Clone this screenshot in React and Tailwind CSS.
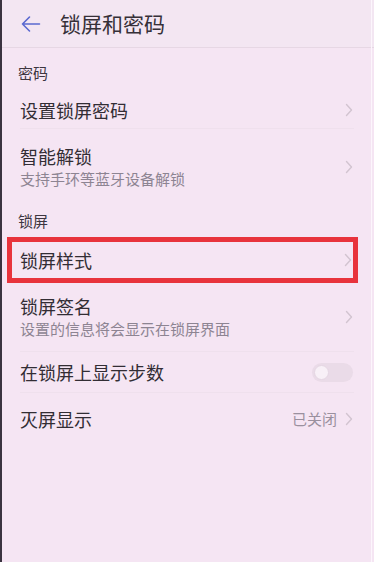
import React from "react";

const font = { fontFamily: '"Noto Sans CJK SC", "Noto Sans", sans-serif' };

function Chevron() {
  return (
    <svg width="8" height="14" viewBox="0 0 8 14" className="shrink-0">
      <path d="M1.5 1.5 L6.5 7 L1.5 12.5" fill="none" stroke="#d2c4d0" strokeWidth="1.4" strokeLinecap="round" strokeLinejoin="round" />
    </svg>
  );
}

function Divider() {
  return <div className="mx-5 h-px bg-[#efe0ed]" />;
}

export default function App() {
  return (
    <div style={font} className="relative w-[374px] h-[562px] overflow-hidden bg-[#f5e5f3] text-[#322d34]">
      <div className="absolute left-0 top-0 h-full w-[2px] bg-[#3a3340]" />
      <div className="absolute right-[2px] top-0 h-full w-px bg-[#fcf6fc]" />
      {/* header */}
      <div className="h-[48px] flex items-center border-b border-[#e6d7e4] bg-[#f3e6f2]">
        <div className="w-[60px] shrink-0 flex items-center pl-[20px]">
          <svg width="21" height="18" viewBox="0 0 21 18" className="shrink-0">
            <path d="M19.5 9 H2.5 M9.5 2 L2.5 9 L9.5 16" fill="none" stroke="#5b69d0" strokeWidth="1.6" strokeLinecap="round" strokeLinejoin="round" />
          </svg>
        </div>
        <span className="text-[21px] leading-none text-[#363038]">锁屏和密码</span>
      </div>
      {/* section 密码 */}
      <div className="h-[44px] flex items-center pl-[18px] pt-[6px] text-[15px] text-[#3d3640]">密码</div>
      <div className="h-[36px] flex items-center justify-between pl-5 pr-[21px]">
        <span className="text-[18px]">设置锁屏密码</span>
        <Chevron />
      </div>
      <Divider />
      <div className="h-[76px] flex items-center justify-between pl-5 pr-[21px]">
        <div className="flex flex-col">
          <span className="text-[18px] leading-[24px]">智能解锁</span>
          <span className="text-[15px] leading-[22px] text-[#8d8492]">支持手环等蓝牙设备解锁</span>
        </div>
        <Chevron />
      </div>
      {/* section 锁屏 */}
      <div className="h-[32px] flex items-center pl-[18px] text-[15px] text-[#3d3640]">锁屏</div>
      <div className="ml-[7px] mr-[16px] h-[46px] flex items-center justify-between border-[5px] border-[#e8333c] pl-[8px] pr-[1px]">
        <span className="text-[18px]">锁屏样式</span>
        <Chevron />
      </div>
      <div className="h-[68px] flex items-center justify-between pl-5 pr-[21px]">
        <div className="flex flex-col">
          <span className="text-[18px] leading-[24px]">锁屏签名</span>
          <span className="text-[15px] leading-[22px] text-[#8d8492]">设置的信息将会显示在锁屏界面</span>
        </div>
        <Chevron />
      </div>
      <Divider />
      <div className="h-[40px] flex items-center justify-between pl-5 pr-[21px]">
        <span className="text-[18px]">在锁屏上显示步数</span>
        <div className="w-[41px] h-[19px] rounded-full bg-[#eadbe8] flex items-center pl-[2px]">
          <div className="w-[15px] h-[15px] rounded-full bg-[#f8f0f7] border border-[#e5d6e3]" />
        </div>
      </div>
      <Divider />
      <div className="h-[52px] flex items-center justify-between pl-5 pr-[21px]">
        <span className="text-[18px]">灭屏显示</span>
        <div className="flex items-center gap-[8px]">
          <span className="text-[15px] text-[#9a909e]">已关闭</span>
          <Chevron />
        </div>
      </div>
    </div>
  );
}
